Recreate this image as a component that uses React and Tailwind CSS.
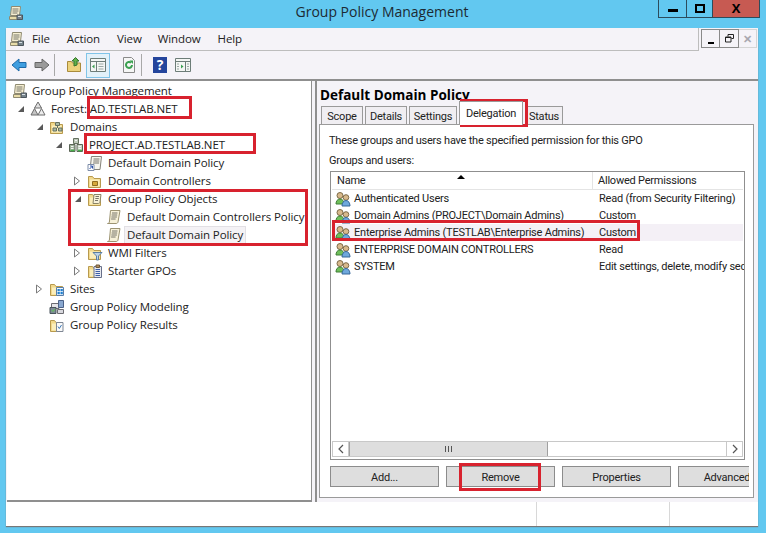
import React from "react";

function ConsoleIcon({ className = "" }) {
  return (
    <svg viewBox="0 0 16 16" className={`h-4 w-4 shrink-0 ${className}`}>
      <path d="M3.500 1.500h9l-1 9h-9z" fill="#f6efd2" stroke="#8f8a70" />
      <path d="M4.500 4h6M4.500 6h6M4.500 8h5" stroke="#77766a" />
      <path d="M1.500 11.500h11v3h-11z" fill="#e8dca8" stroke="#8f8a70" />
      <path d="M9 10h5.500v4.500H9z" fill="#77848c" stroke="#4c555c" />
      <path d="M10 11.500h3" stroke="#d8e0e4" />
    </svg>
  );
}

function FolderIcon({ children }) {
  return (
    <svg viewBox="0 0 16 16" className="h-4 w-4 shrink-0">
      <path d="M1.500 3.500V14.500h12V5.500H7L5.500 3.500z" fill="#f2d98c" stroke="#b89a4e" />
      <path d="M3 6.500h9.500v7H3z" fill="#fbeebb" />
      {children}
    </svg>
  );
}

function ScrollIcon({ className = "" }) {
  return (
    <svg viewBox="0 0 16 16" className={`h-4 w-4 shrink-0 ${className}`}>
      <path d="M4.500 1.500h9.500l-2 11.500c-.2 1-1 1.500-2 1.500H1.500c1 0 1.700-.6 1.900-1.500z" fill="#f7f1d8" stroke="#9d9472" />
      <path d="M6 4h5.500M5.700 6h5.500M5.400 8h5.500M5.100 10h4.500" stroke="#77756a" />
    </svg>
  );
}

function TreeIcon({ kind }) {
  if (kind === "console") return <ConsoleIcon />;
  if (kind === "scroll") return <ScrollIcon />;
  if (kind === "forest")
    return (
      <svg viewBox="0 0 16 16" className="h-4 w-4 shrink-0">
        <path d="M8 1l3.500 6h-7z" fill="#dfdfdf" stroke="#6c6c6c" />
        <path d="M4.500 7.500L8 14H1z" fill="#c4c4c4" stroke="#6c6c6c" />
        <path d="M11.500 7.500L15 14H8z" fill="#ececec" stroke="#6c6c6c" />
      </svg>
    );
  if (kind === "domains")
    return (
      <FolderIcon>
        <path d="M6.500 3.500h4v3h-4zM4 9h3.500v3H4zM9.500 9H13v3H9.500z" fill="#a9b9a6" stroke="#64705f" />
        <path d="M8.500 6.500V9" stroke="#64705f" />
      </FolderIcon>
    );
  if (kind === "domain")
    return (
      <svg viewBox="0 0 16 16" className="h-4 w-4 shrink-0">
        <path d="M5.500 1.500h5v5h-5z" fill="#bcc8b8" stroke="#65705f" />
        <path d="M1.500 7.500h5.500v7H1.500z" fill="#9fb29b" stroke="#5a6556" />
        <path d="M9 7.500h5.500v7H9z" fill="#c8d4c4" stroke="#5a6556" />
        <path d="M2.500 13.500h4M10 13.500h4" stroke="#46b04a" strokeWidth="1.500" />
        <path d="M3 9.500h2.500M3 11.500h2.500M10.500 9.500H13M10.500 11.500H13M7 3.500h2" stroke="#f4f4f4" />
      </svg>
    );
  if (kind === "link")
    return (
      <svg viewBox="0 0 16 16" className="h-4 w-4 shrink-0">
        <path d="M4.500 1.500h10l-1.500 13H3z" fill="#f7f6ee" stroke="#85837a" />
        <path d="M6.500 4h6M6.300 6h6M6.100 8h6" stroke="#77756a" />
        <path d="M1 9.500h6v6H1z" fill="#fff" stroke="#7d8ca8" />
        <path d="M2.500 14l3-3M3 11h2.500v2.500" stroke="#2a50a8" fill="none" />
      </svg>
    );
  if (kind === "ou")
    return (
      <FolderIcon>
        <path d="M5.500 8.500h5v4h-5z" fill="#d5a93a" stroke="#8f6d1e" />
      </FolderIcon>
    );
  if (kind === "gpo")
    return (
      <FolderIcon>
        <path d="M7 3.500h7l-1 7.500c-.2 1-.7 1.500-1.500 1.500H6z" fill="#f7f1d8" stroke="#8a8468" />
        <path d="M8.500 5.500H12M8.300 7.500h3.500M8 9.500h3" stroke="#77756a" />
      </FolderIcon>
    );
  if (kind === "wmi")
    return (
      <FolderIcon>
        <path d="M6 7.500h9L11.500 11v4h-2v-4z" fill="#bcd3e8" stroke="#5b7ea0" />
      </FolderIcon>
    );
  if (kind === "starter")
    return (
      <FolderIcon>
        <path d="M7 3.500h7.500v11H7z" fill="#e8eaf0" stroke="#68708a" />
        <path d="M9 2h3.500v2.500H9z" fill="#b08d62" stroke="#6e5838" />
        <path d="M8.500 6.500H13M8.500 8.500H13M8.500 10.500H13M8.500 12.500H13" stroke="#3d5fa8" />
      </FolderIcon>
    );
  if (kind === "sites")
    return (
      <FolderIcon>
        <path d="M7.500 6.500h7v8h-7z" fill="#f4f8fc" stroke="#5a7ea8" />
        <path d="M8.500 8h2.300v2.300H8.500zM11.500 8h2.300v2.300h-2.300zM8.500 11h2.300v2.300H8.500zM11.500 11h2.300v2.300h-2.300z" fill="#1f7fd0" />
      </FolderIcon>
    );
  if (kind === "modeling")
    return (
      <svg viewBox="0 0 16 16" className="h-4 w-4 shrink-0">
        <path d="M2.500 4.500h7.500v5H2.500z" fill="#e5e5e8" stroke="#6c6c72" />
        <path d="M9.500 1.500h5v7h-5z" fill="#8aa8d0" stroke="#4c6288" />
        <path d="M1 8.500h6v6H1z" fill="#7d8c96" stroke="#4a555c" />
        <path d="M2.500 11l1.500 1.500L6 10" stroke="#5fc84f" fill="none" />
        <path d="M8.500 10.500h6v4h-6z" fill="#d8d8de" stroke="#6c6c72" />
      </svg>
    );
  return (
    <FolderIcon>
      <path d="M7.500 5.500h6.500v9H7.500z" fill="#fafafa" stroke="#7f8794" />
      <path d="M9 9.500l1.300 2 2.200-3.500" stroke="#3b78b8" fill="none" />
    </FolderIcon>
  );
}

function Expander({ state }) {
  return (
    <span className="flex h-full w-[19px] shrink-0 items-center justify-center">
      {state === "open" && (
        <svg viewBox="0 0 8 8" className="h-2 w-2">
          <path d="M7 1v6H1z" fill="#595959" />
        </svg>
      )}
      {state === "closed" && (
        <svg viewBox="0 0 8 10" className="-ml-px h-[10px] w-2">
          <path d="M1.500 1l5 4-5 4z" fill="#fff" stroke="#7b7b7b" />
        </svg>
      )}
    </span>
  );
}

const treeRows = [
  { label: "Forest: AD.TESTLAB.NET", icon: "forest", pad: "pl-[4px]", exp: "open" },
  { label: "Domains", icon: "domains", pad: "pl-[23px]", exp: "open" },
  { label: "PROJECT.AD.TESTLAB.NET", icon: "domain", pad: "pl-[42px]", exp: "open" },
  { label: "Default Domain Policy", icon: "link", pad: "pl-[61px]" },
  { label: "Domain Controllers", icon: "ou", pad: "pl-[61px]", exp: "closed" },
  { label: "Group Policy Objects", icon: "gpo", pad: "pl-[61px]", exp: "open" },
  { label: "Default Domain Controllers Policy", icon: "scroll", pad: "pl-[80px]" },
  { label: "Default Domain Policy", icon: "scroll", pad: "pl-[80px]", selected: true },
  { label: "WMI Filters", icon: "wmi", pad: "pl-[61px]", exp: "closed" },
  { label: "Starter GPOs", icon: "starter", pad: "pl-[61px]", exp: "closed" },
  { label: "Sites", icon: "sites", pad: "pl-[23px]", exp: "closed" },
  { label: "Group Policy Modeling", icon: "modeling", pad: "pl-[23px]" },
  { label: "Group Policy Results", icon: "results", pad: "pl-[23px]" },
];

const people = [
  ["Authenticated Users", "Read (from Security Filtering)"],
  ["Domain Admins (PROJECT\\Domain Admins)", "Custom"],
  ["Enterprise Admins (TESTLAB\\Enterprise Admins)", "Custom"],
  ["ENTERPRISE DOMAIN CONTROLLERS", "Read"],
  ["SYSTEM", "Edit settings, delete, modify security"],
];

function UsersIcon() {
  return (
    <svg viewBox="0 0 16 16" className="h-4 w-4 shrink-0">
      <circle cx="5" cy="4.500" r="3" fill="#d8b98c" stroke="#7d6a48" />
      <path d="M1 13c0-3 1.500-5 4-5s4 2 4 5z" fill="#6fbf5a" stroke="#3f7d36" />
      <circle cx="11" cy="6.500" r="2.800" fill="#d8b98c" stroke="#7d6a48" />
      <path d="M7 15c0-3 1.500-5.500 4-5.500s4 2.500 4 5.500z" fill="#6fa8dc" stroke="#37689a" />
    </svg>
  );
}

function Btn({ children, w = "w-[109px]" }) {
  return (
    <div className={`flex h-[21px] shrink-0 items-center justify-center border border-[#8c8c8c] bg-[#dedede] pt-[2px] ${w}`}>
      {children}
    </div>
  );
}

function Tab({ children, w }) {
  return <div className={`flex h-[18px] items-center justify-center border border-b-0 border-[#9a9a9a] bg-[#f0eef2] pt-px ${w}`}>{children}</div>;
}

function RedBox({ pos }) {
  return <div className={`pointer-events-none absolute border-[3px] border-[#d8222e] ${pos}`} />;
}

export default function App() {
  return (
    <div className="relative h-[533px] w-[766px] overflow-hidden bg-[#62c8f0] font-['Open_Sans',sans-serif] text-[11.5px] leading-none tracking-[-0.1px] text-[#222]">
      {/* title bar */}
      <div className="relative flex h-7 items-start pl-2 pt-[5px]">
        <ConsoleIcon />
        <div className="absolute inset-x-0 top-[5px] pr-[2px] text-center text-[14px] tracking-normal text-[#1c2a33]">Group Policy Management</div>
        <div className="absolute right-[6px] top-0 flex h-[18px] border border-t-0 border-[#2c4c5c]">
          <div className="flex w-[28px] items-center justify-center border-r border-[#2c4c5c]">
            <span className="mt-[4px] h-[3px] w-[10px] bg-black" />
          </div>
          <div className="flex w-[26px] items-center justify-center border-r border-[#2c4c5c]">
            <span className="h-[9px] w-[10px] border-2 border-black" />
          </div>
          <div className="flex w-[46px] items-center justify-center bg-[#c75a52] text-[13px] font-bold text-black">X</div>
        </div>
      </div>

      {/* window */}
      <div className="ml-[6px] flex h-[498px] w-[752px] flex-col bg-[#f5f3f8] shadow-[0_1px_1px_#777]">
        <div className="flex h-[23px] shrink-0">
          <div className="flex flex-1 items-center border-b border-r border-[#bdbdbd] pl-[3px]">
            <ConsoleIcon />
            <span className="ml-[7px]">File</span>
            <span className="ml-[17px]">Action</span>
            <span className="ml-[17px]">View</span>
            <span className="ml-[16px]">Window</span>
            <span className="ml-[17px]">Help</span>
          </div>
          <div className="ml-[2px] flex h-[20px] items-start pt-[1px] pr-[1px]">
            <div className="flex h-[19px] w-[19px] items-end justify-center border border-[#8a8a8a] pb-[3px]">
              <span className="h-[2px] w-[6px] bg-black" />
            </div>
            <div className="flex h-[19px] w-[19px] items-center justify-center border border-l-0 border-[#8a8a8a]">
              <svg viewBox="0 0 9 9" className="h-[9px] w-[9px]">
                <path d="M3 2.500V.500h5.500v4H6.500M.500 3h5.500v5H.500zM.500 3.500h5.500" fill="none" stroke="#222" />
              </svg>
            </div>
            <div className="flex h-[19px] w-[18px] items-center justify-center border border-l-0 border-[#d5d5d5] text-[11px] font-bold text-[#a8a8b0]">✕</div>
          </div>
        </div>

        {/* toolbar */}
        <div className="flex h-[30px] shrink-0 items-center border-b-2 border-[#8f8f8f] pl-[5px]">
          <svg viewBox="0 0 16 16" className="h-4 w-4">
            <path d="M8 2L1 8l7 6v-3.500h7v-5H8z" fill="#3f9ee0" stroke="#1f6aa8" />
          </svg>
          <svg viewBox="0 0 16 16" className="ml-[7px] h-4 w-4">
            <path d="M8 2l7 6-7 6v-3.500H1v-5h7z" fill="#9a9a9a" stroke="#666" />
          </svg>
          <span className="ml-[4px] h-[22px] w-px bg-[#a8a8a8]" />
          <svg viewBox="0 0 16 16" className="ml-[11px] h-4 w-4">
            <path d="M1.500 4.500h4l1 1.500h8v8.500h-13z" fill="#ecd27c" stroke="#a98b3c" />
            <path d="M8 9V4H6l3.500-3.500L13 4h-2v4z" fill="#5fb04a" stroke="#37752c" />
          </svg>
          <div className="ml-[4px] flex h-[25px] w-[24px] items-center justify-center border border-[#80c4e8] bg-[#e2f1f9]">
            <svg viewBox="0 0 16 14" className="h-[14px] w-4">
              <path d="M.500.500h15v13H.500z" fill="#f4f6f4" stroke="#6d7d78" />
              <path d="M.500 3.500h15M6.500 3.500v10" stroke="#6d7d78" />
              <path d="M4.500 6.500v4L2 8.500z" fill="#3aa050" />
              <path d="M8.500 6h5M8.500 8.500h5M8.500 11h5" stroke="#9aa8a4" />
            </svg>
          </div>
          <svg viewBox="0 0 16 16" className="ml-[11px] h-4 w-4">
            <path d="M2.500.500h8l3 3v12h-11z" fill="#f6f6f6" stroke="#8a8a8a" />
            <path d="M11 8a3 3 0 1 1-1-2.300" fill="none" stroke="#3aa050" strokeWidth="2" />
            <path d="M8.500 3.500h3.500v3.500z" fill="#3aa050" />
          </svg>
          <span className="ml-[4px] h-[22px] w-px bg-[#a8a8a8]" />
          <div className="ml-[11px] flex h-4 w-[14px] items-center justify-center bg-[#24459c] text-[14px] font-bold text-white">?</div>
          <svg viewBox="0 0 16 14" className="ml-[8px] h-[14px] w-4">
            <path d="M.500.500h15v13H.500z" fill="#f4f6f4" stroke="#6d7d78" />
            <path d="M.500 3.500h15M10.500 3.500v10" stroke="#6d7d78" />
            <path d="M6 6.500v4L8.500 8.500z" fill="#3aa050" />
            <path d="M2 6h2M2 8.500h2M2 11h2M12 6h2M12 8.500h2M12 11h2" stroke="#9aa8a4" />
          </svg>
        </div>

        {/* panes */}
        <div className="flex min-h-0 flex-1">
          {/* tree */}
          <div className="ml-px h-full w-[305px] shrink-0 border-b-2 border-r border-[#8f8f8f] bg-white pt-px">
            <div className="flex h-[18px] items-center gap-1 pl-[5px]">
              <ConsoleIcon />
              <span className="whitespace-nowrap">Group Policy Management</span>
            </div>
            {treeRows.map((row, i) => (
              <div key={i} className={`flex h-[18px] items-center ${row.pad}`}>
                <Expander state={row.exp} />
                <TreeIcon kind={row.icon} />
                <span className={`ml-[2px] whitespace-nowrap border px-[2px] py-[2px] ${row.selected ? "border-[#e2e0e4] bg-[#f4f2f5]" : "border-transparent"}`}>
                  {row.label}
                </span>
              </div>
            ))}
          </div>

          {/* detail */}
          <div className="ml-[3px] flex min-w-0 flex-1 flex-col border-l-2 border-[#8f8f8f] pl-[2px] pr-[4px] font-['Roboto',sans-serif] text-[11px] tracking-[-0.22px]">
            <div className="flex h-[25px] shrink-0 items-end pb-[4px] pl-px font-['Open_Sans',sans-serif] text-[13.5px] font-bold tracking-normal text-black">Default Domain Policy</div>
            <div className="flex h-[18px] shrink-0 items-end gap-[2px] pl-[2px]">
              <Tab w="w-[42px]">Scope</Tab>
              <Tab w="w-[42px]">Details</Tab>
              <Tab w="w-[48px]">Settings</Tab>
              <div className="z-10 -mb-px flex h-[24px] w-[64px] items-center justify-center border border-b-0 border-[#9a9a9a] bg-white">Delegation</div>
              <Tab w="w-[38px]">Status</Tab>
            </div>
            <div className="mb-[4px] flex min-h-0 flex-1 flex-col border border-[#9a9a9a] bg-white pb-[10px] pl-[9px] pr-[3px]">
              <div className="flex h-[24px] shrink-0 items-center pt-[6px]">These groups and users have the specified permission for this GPO</div>
              <div className="flex h-[19px] shrink-0 items-center pt-[3px]">Groups and users:</div>
              <div className="ml-px mr-[5px] mt-[3px] flex min-h-0 flex-1 flex-col overflow-hidden border border-[#8f8f8f] px-px pb-[2px]">
                <div className="relative flex h-[18px] shrink-0 border-b border-[#e4e4e4]">
                  <div className="flex w-[261px] shrink-0 items-center border-r border-[#e4e4e4] pl-[5px]">Name</div>
                  <div className="flex items-center whitespace-nowrap pl-[5px]">Allowed Permissions</div>
                  <span className="absolute left-[125px] top-[3px] h-0 w-0 border-x-[4px] border-b-[4px] border-x-transparent border-b-black" />
                </div>
                <div className="min-h-0 flex-1">
                  {people.map((p, i) => (
                    <div key={p[0]} className={`flex h-[17px] items-center whitespace-nowrap ${i === 2 ? "bg-[#f4f0f6]" : ""}`}>
                      <div className="flex w-[261px] shrink-0 items-center gap-[3px] pl-[3px]">
                        <UsersIcon />
                        <span>{p[0]}</span>
                      </div>
                      <span className="pl-[6px]">{p[1]}</span>
                    </div>
                  ))}
                </div>
                <div className="flex h-[16px] shrink-0 items-stretch border border-[#c8c8c8]">
                  <div className="flex w-[16px] items-center justify-center border-r border-[#c8c8c8]">
                    <svg viewBox="0 0 6 10" className="h-[10px] w-[6px]">
                      <path d="M5 1L1 5l4 4" fill="none" stroke="#555" strokeWidth="1.200" />
                    </svg>
                  </div>
                  <div className="flex w-[199px] items-center justify-center border border-y-0 border-[#a0a0a0] bg-[#dedede]">
                    <span className="h-[6px] w-[7px] border-x border-[#555] bg-[linear-gradient(90deg,transparent_2px,#555_2px,#555_3px,transparent_3px)]" />
                  </div>
                  <div className="flex-1" />
                  <div className="flex w-[16px] items-center justify-center border-l border-[#c8c8c8]">
                    <svg viewBox="0 0 6 10" className="h-[10px] w-[6px]">
                      <path d="M1 1l4 4-4 4" fill="none" stroke="#555" strokeWidth="1.200" />
                    </svg>
                  </div>
                </div>
              </div>
              <div className="ml-px mr-px mt-[6px] flex shrink-0 gap-[7px] overflow-hidden">
                <Btn>Add...</Btn>
                <Btn>Remove</Btn>
                <Btn>Properties</Btn>
                <Btn w="w-[98px]">Advanced</Btn>
              </div>
            </div>
          </div>
        </div>

        {/* status bar */}
        <div className="flex h-[24px] shrink-0 bg-white">
          <div className="w-[531px] border-r border-[#d8d8d8]" />
          <div className="w-[133px] border-r border-[#d8d8d8]" />
        </div>
      </div>

      {/* annotation boxes drawn over the screenshot */}
      <RedBox pos="left-[87px] top-[96px] h-[23px] w-[105px]" />
      <RedBox pos="left-[84px] top-[133px] h-[21px] w-[172px]" />
      <RedBox pos="left-[68px] top-[189px] h-[57px] w-[240px]" />
      <RedBox pos="left-[460px] top-[99px] h-[28px] w-[68px]" />
      <RedBox pos="left-[332px] top-[220px] h-[21px] w-[308px]" />
      <RedBox pos="left-[459px] top-[463px] h-[28px] w-[82px]" />
    </div>
  );
}
